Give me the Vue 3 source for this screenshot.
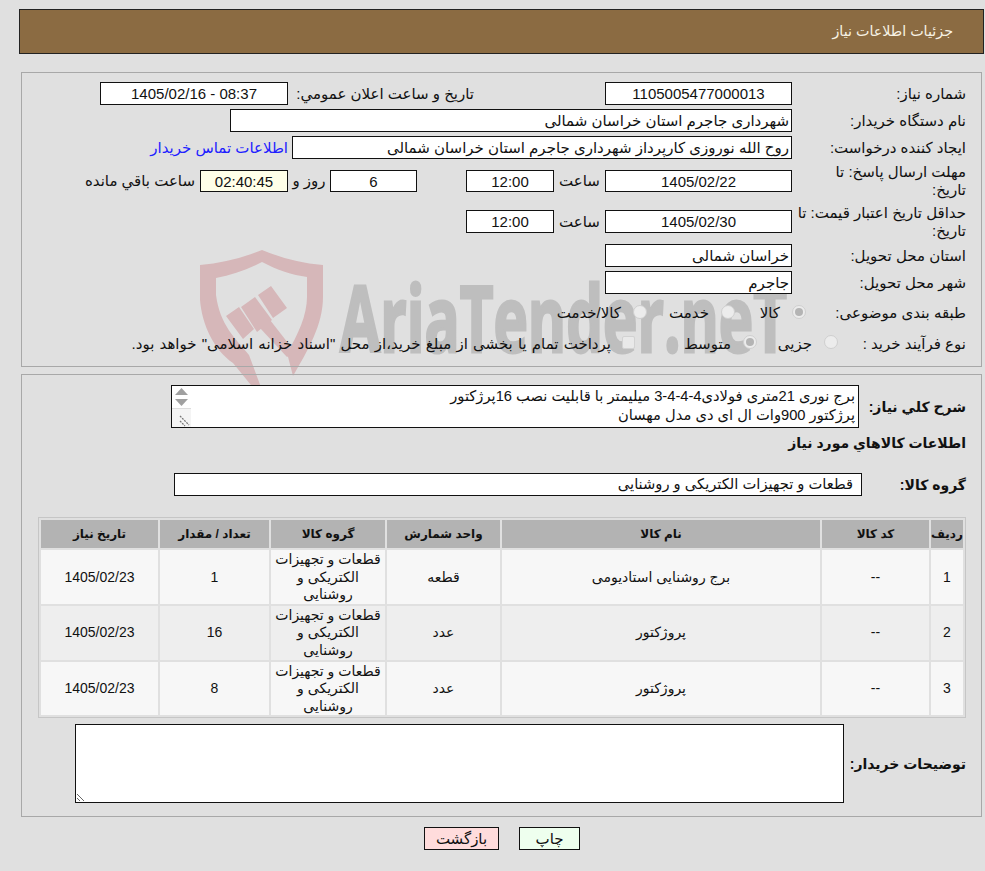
<script setup>
const rows = [
  { id: 1, code: '--', name: 'برج روشنایی استادیومی', unit: 'قطعه', group: 'قطعات و تجهیزات الکتریکی و روشنایی', qty: 1, date: '1405/02/23' },
  { id: 2, code: '--', name: 'پروژکتور', unit: 'عدد', group: 'قطعات و تجهیزات الکتریکی و روشنایی', qty: 16, date: '1405/02/23' },
  { id: 3, code: '--', name: 'پروژکتور', unit: 'عدد', group: 'قطعات و تجهیزات الکتریکی و روشنایی', qty: 8, date: '1405/02/23' }
]
const description = 'برج نوری 21متری فولادی4-4-4-3 میلیمتر با قابلیت نصب 16پرژکتور\nپرژکتور 900وات ال ای دی مدل مهسان'
</script>

<template>
  <div class="page" dir="rtl">
    <svg class="watermark" width="640" height="180" viewBox="0 0 640 180">
      <path class="mark" d="M93 126 C108 100 123 75 123 47 L123 15 C100 13 82 8 62 0 C42 8 22 13 0 15 L0 50 C2 75 14 100 33 113 L55 140 L62 140 L49 105 C35 88 20 75 16 45 L16 28 C32 25 47 20 62 12 C77 20 92 25 107 27 L107 47 C107 65 98 85 87 103 Z" />
      <path class="mark" d="M26 66 L39 57 L54 79 L43 89 Z M41 57 L55 47 L72 70 L57 82 Z M58 45 L71 36 L87 58 L73 68 Z" />
      <path class="mark" d="M60 78 L70 70 L95 102 L87 107 Z" />
      <text class="mark-text" x="140" y="102" textLength="447" lengthAdjust="spacingAndGlyphs">AriaTender.neT</text>
    </svg>

    <div class="banner">جزئیات اطلاعات نیاز</div>

    <div class="panel panel-info">
      <div class="row">
        <div class="label">شماره نیاز:</div>
        <div class="field w187 center">1105005477000013</div>
        <div class="label-mid">تاریخ و ساعت اعلان عمومي:</div>
        <div class="field w188 center">08:37 - 1405/02/16</div>
      </div>
      <div class="row">
        <div class="label">نام دستگاه خریدار:</div>
        <div class="field w562">شهرداری جاجرم استان خراسان شمالی</div>
      </div>
      <div class="row">
        <div class="label">ایجاد کننده درخواست:</div>
        <div class="field w500">روح الله نوروزی کارپرداز شهرداری جاجرم استان خراسان شمالی</div>
        <a class="contact" href="#">اطلاعات تماس خریدار</a>
      </div>
      <div class="row tall-a">
        <div class="label">مهلت ارسال پاسخ: تا تاریخ:</div>
        <div class="field w187 center short">1405/02/22</div>
        <div class="hour">ساعت</div>
        <div class="field w88 center short">12:00</div>
        <div class="field w87 center short skip">6</div>
        <div class="days">روز و</div>
        <div class="field w88 center short remain">02:40:45</div>
        <div class="left-text">ساعت باقي مانده</div>
      </div>
      <div class="row tall-b">
        <div class="label">حداقل تاریخ اعتبار قیمت: تا تاریخ:</div>
        <div class="field w187 center">1405/02/30</div>
        <div class="hour">ساعت</div>
        <div class="field w88 center">12:00</div>
      </div>
      <div class="row">
        <div class="label">استان محل تحویل:</div>
        <div class="field w187">خراسان شمالی</div>
      </div>
      <div class="row">
        <div class="label">شهر محل تحویل:</div>
        <div class="field w187">جاجرم</div>
      </div>
      <div class="row row-radio">
        <div class="label label-radio">طبقه بندی موضوعی:</div>
        <span class="radio checked"></span><span class="opt w-kala">کالا</span>
        <span class="radio"></span><span class="opt w-service">خدمت</span>
        <span class="radio"></span><span class="opt">کالا/خدمت</span>
      </div>
      <div class="row row-buy">
        <div class="label label-buy">نوع فرآیند خرید :</div>
        <span class="radio"></span><span class="opt w-part">جزیی</span>
        <span class="radio checked"></span><span class="opt w-mid">متوسط</span>
        <span class="check"></span><span class="opt pay">پرداخت تمام یا بخشی از مبلغ خرید،از محل "اسناد خزانه اسلامی" خواهد بود.</span>
      </div>
    </div>

    <div class="panel panel-goods">
      <div class="row desc-row">
        <div class="label-bold desc-label">شرح كلي نياز:</div>
        <div class="desc-box">
          <textarea class="desc" readonly :value="description"></textarea>
          <div class="scrollbar">
            <svg class="arrows" width="19" height="22" viewBox="0 0 19 22">
              <path d="M3 9 L9.5 2 L16 9 Z" fill="#a0a0a0" />
              <path d="M3 13 L16 13 L9.5 20 Z" fill="#a0a0a0" />
            </svg>
            <div class="grip">
              <svg width="12" height="12" viewBox="0 0 12 12">
                <path d="M1 1 L10 10 M1 6 L6 11" stroke="#777" stroke-width="1.3" stroke-dasharray="2 1" fill="none" />
              </svg>
            </div>
          </div>
        </div>
      </div>
      <div class="goods-title">اطلاعات كالاهاي مورد نياز</div>
      <div class="row group-row">
        <div class="label-bold group-label">گروه کالا:</div>
        <div class="field group-field">قطعات و تجهیزات الکتریکی و روشنایی</div>
      </div>

      <table class="goods">
        <thead>
          <tr>
            <th class="c-id">ردیف</th>
            <th class="c-code">کد کالا</th>
            <th class="c-name">نام کالا</th>
            <th class="c-unit">واحد شمارش</th>
            <th class="c-group">گروه کالا</th>
            <th class="c-qty">تعداد / مقدار</th>
            <th>تاریخ نیاز</th>
          </tr>
        </thead>
        <tbody>
          <tr v-for="r in rows" :key="r.id">
            <td>{{ r.id }}</td>
            <td>{{ r.code }}</td>
            <td>{{ r.name }}</td>
            <td>{{ r.unit }}</td>
            <td>{{ r.group }}</td>
            <td>{{ r.qty }}</td>
            <td>{{ r.date }}</td>
          </tr>
        </tbody>
      </table>

      <div class="row notes-row">
        <div class="label-bold notes-label">توضیحات خریدار:</div>
        <textarea class="notes" readonly></textarea>
      </div>
    </div>

    <div class="actions">
      <button class="btn print">چاپ</button>
      <button class="btn back">بازگشت</button>
    </div>
  </div>
</template>

<style>
html, body {
  background: #e0e0e0;
}
</style>

<style scoped>
.page {
  position: relative;
  z-index: 0;
  min-height: 871px;
  padding: 9px 1px 0 3px;
  box-sizing: border-box;
  background: #e0e0e0;
  font-family: "Liberation Sans", "DejaVu Sans", sans-serif;
  font-size: 15px;
  color: #111;
}
.watermark {
  position: absolute;
  left: 200px;
  top: 250px;
  z-index: -1;
  direction: ltr;
}
.mark {
  fill: #d6b7b9;
}
.mark-text {
  direction: ltr;
  fill: #bebebe;
  stroke: #bebebe;
  stroke-width: 3px;
  font-family: "Open Sans", sans-serif;
  font-weight: 700;
  font-size: 92px;
}
.banner {
  height: 45px;
  margin-left: 16px;
  box-sizing: border-box;
  border: 1px solid #222;
  background: #8b6b42;
  color: #f7f2e4;
  padding: 0 30px 0 0;
  line-height: 43px;
  font-size: 14.3px;
}
.panel {
  border: 1px solid #a8a8a8;
  margin-left: 18px;
  margin-right: 2px;
  padding-right: 15px;
}
.panel-info {
  margin-top: 18px;
  padding-top: 9px;
  padding-bottom: 11px;
  display: flex;
  flex-direction: column;
  gap: 4px;
}
.panel-goods {
  margin-top: 7px;
  padding-top: 10px;
  padding-bottom: 13px;
}
.row {
  display: flex;
  align-items: center;
  min-height: 23px;
}
.tall-a {
  height: 36px;
}
.tall-b {
  height: 37px;
}
.tall-b .label {
  width: 173px;
  margin-left: 1px;
}
.label {
  width: 166px;
  margin-left: 8px;
  flex: none;
  line-height: 18px;
}
.label-mid {
  width: 181px;
  margin-right: 131px;
  margin-left: 5px;
  flex: none;
  white-space: nowrap;
}
.label-radio {
  width: 152px;
}
.label-buy {
  width: 128px;
  margin-left: 0;
}
.field {
  height: 23px;
  box-sizing: border-box;
  border: 1px solid #111;
  background: #fff;
  padding: 0 2px;
  line-height: 21px;
  flex: none;
  white-space: nowrap;
  overflow: hidden;
}
.short {
  height: 22px;
}
.center {
  text-align: center;
}
.w187 { width: 187px; }
.w188 { width: 188px; }
.w88 { width: 88px; }
.w87 { width: 87px; }
.w500 { width: 500px; }
.w562 { width: 562px; }
.contact {
  margin-right: 4px;
  color: #2020ff;
  text-decoration: none;
  white-space: nowrap;
}
.hour {
  width: 51px;
  flex: none;
  text-align: center;
}
.skip {
  margin-right: 49px;
}
.days {
  width: 42px;
  flex: none;
  text-align: center;
}
.remain {
  background: #ffffe8;
}
.left-text {
  margin-right: 5px;
  white-space: nowrap;
}
.row-radio {
  height: 30px;
}
.row-buy {
  height: 22px;
}
.radio {
  width: 14px;
  height: 14px;
  flex: none;
  box-sizing: border-box;
  border: 1px solid #cfcfcf;
  border-radius: 50%;
  background: #ececec;
  margin-top: -3px;
  display: flex;
  align-items: center;
  justify-content: center;
}
.radio.checked::before {
  content: "";
  width: 8px;
  height: 8px;
  border-radius: 50%;
  background: #b4b4b4;
}
.check {
  width: 13px;
  height: 13px;
  flex: none;
  margin-top: -3px;
  border-radius: 2px;
  background: #e9e9e9;
  border: 1px solid #d2d2d2;
  box-sizing: border-box;
}
.opt {
  margin-right: 12px;
  flex: none;
}
.w-kala { width: 45px; }
.w-service { width: 62px; }
.w-part { width: 55px; }
.w-mid { width: 96px; }
.pay {
  margin-right: 11px;
  word-spacing: 1px;
}
.label-bold {
  font-weight: 700;
  font-size: 14px;
  flex: none;
}
.desc-label {
  width: 102px;
  margin-left: 5px;
}
.desc-box {
  width: 688px;
  height: 43px;
  box-sizing: border-box;
  border: 1px solid #111;
  background: #fff;
  display: flex;
}
.desc {
  flex: 1;
  min-width: 0;
  border: none;
  padding: 1px 3px;
  margin: 0;
  overflow: hidden;
  resize: none;
  font-family: inherit;
  font-size: 14.7px;
  line-height: 19px;
  color: #111;
  outline: none;
}
.scrollbar {
  width: 19px;
  flex: none;
  display: flex;
  flex-direction: column;
  background: #fff;
}
.arrows {
  display: block;
}
.grip {
  flex: 1;
  border-top: 1px solid #ddd;
  background: #f4f4f4;
  display: flex;
  align-items: flex-end;
}
.grip svg {
  display: block;
}
.goods-title {
  margin-top: 6px;
  font-weight: 700;
  font-size: 14px;
  line-height: 18px;
}
.group-row {
  margin-top: 21px;
}
.group-label {
  width: 104px;
}
.group-field {
  width: 688px;
  padding-right: 8px;
  font-size: 14.7px;
}
.goods {
  width: 928px;
  margin-top: 21px;
  border: 1px solid #c6c6c6;
  border-spacing: 2px;
  table-layout: fixed;
  font-size: 14px;
}
.goods th {
  height: 28px;
  padding: 0;
  background: #b3b3b3;
  font-size: 12px;
  font-weight: 700;
}
.goods td {
  height: 53.5px;
  padding: 1px 3px 0;
  box-sizing: border-box;
  text-align: center;
  line-height: 17.6px;
  background: #f7f7f7;
}
.goods tbody tr:nth-child(2) td {
  background: #eeeeee;
}
.c-id { width: 32px; }
.c-code { width: 107px; }
.c-name { width: 318px; }
.c-unit { width: 113px; }
.c-group { width: 114px; }
.c-qty { width: 109px; }
.notes-row {
  margin-top: 6px;
}
.notes-label {
  width: 116px;
  margin-left: 6px;
  white-space: nowrap;
}
.notes {
  width: 769px;
  height: 79px;
  box-sizing: border-box;
  border: 1px solid #111;
  border-radius: 0;
  margin: 0;
  outline: none;
  resize: both;
}
.actions {
  margin-top: 10px;
  margin-right: 404px;
  display: flex;
  gap: 20px;
}
.btn {
  height: 23px;
  box-sizing: border-box;
  border: 1px solid #111;
  padding: 0;
  font-family: inherit;
  font-size: 15px;
  color: #111;
}
.print {
  width: 61px;
  background: #eeffee;
}
.back {
  width: 75px;
  background: #ffdcdc;
}
</style>
